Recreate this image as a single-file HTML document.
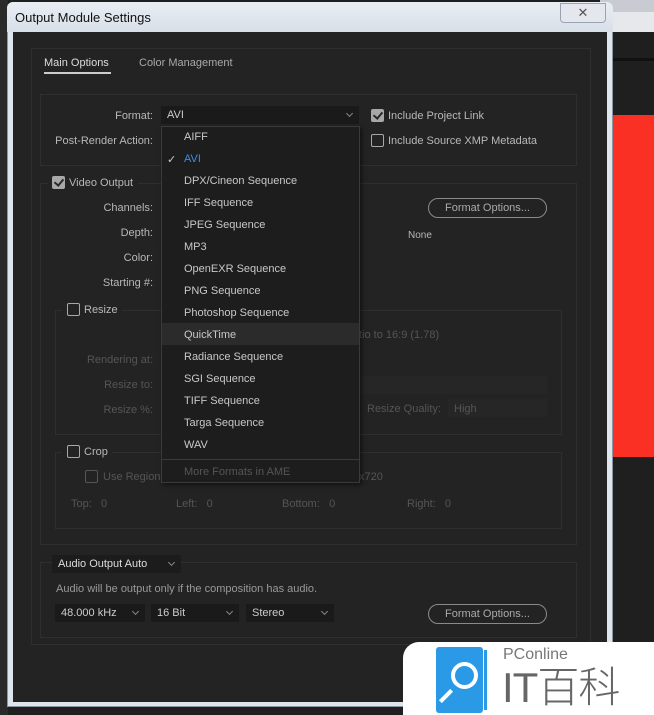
<!DOCTYPE html>
<html><head><meta charset="utf-8"><style>
*{margin:0;padding:0;box-sizing:border-box}
body{width:654px;height:715px;overflow:hidden;background:#1f1f1f;position:relative;font-family:"Liberation Sans",sans-serif;font-size:11px;color:#b8b8b8}
.a{position:absolute;white-space:nowrap}
.t{margin-top:1px}
.box{position:absolute;border:1px solid #2f2f2f}
.r{text-align:right;width:120px}
.cb{position:absolute;width:13px;height:13px;border:1.5px solid #a8a8a8;border-radius:2px}
.cb.on{background:#a8a8a8}
.cb.on:after{content:"";position:absolute;left:3px;top:0px;width:4px;height:7px;border:solid #2a2a2a;border-width:0 2px 2px 0;transform:rotate(40deg)}
.dd{position:absolute;background:#1a1a1a;height:18px;color:#ccc;padding:3px 0 0 6px}
.dd:after{content:"";position:absolute;right:7px;top:5px;width:4px;height:4px;border:solid #888;border-width:0 1px 1px 0;transform:rotate(45deg)}
.btn{position:absolute;border:1px solid #8a8a8a;border-radius:10px;height:20px;text-align:center;color:#aaa;padding-top:3px}
.dim{color:#555}
.it{position:absolute;left:22px;color:#c8c8c8;margin-top:1px}
</style></head><body>
<div class="a" style="left:600px;top:0;width:54px;height:12px;background:#c8ccd2"></div>
<div class="a" style="left:600px;top:12px;width:54px;height:20px;background:#e6e8ec"></div>
<div class="a" style="left:612px;top:58px;width:42px;height:3px;background:#111"></div>
<div class="a" style="left:612px;top:115px;width:42px;height:342px;background:#fb3024"></div>
<div class="a" style="left:0;top:0;width:8px;height:715px;background:#2a2a2a"></div>
<div class="a" style="left:7px;top:2px;width:606px;height:705px;background:#dfe5ec;border:1px solid #8a96a4;border-radius:6px 6px 0 0"></div>
<div class="a" style="left:7px;top:2px;width:606px;height:30px;background:linear-gradient(#e9eef4,#d8dfe8);border-radius:6px 6px 0 0"></div>
<div class="a" style="left:15px;top:10px;font-size:13px;color:#111">Output Module Settings</div>
<div class="a" style="left:560px;top:3px;width:46px;height:20px;border:1px solid #9aa4b0;border-radius:0 0 4px 4px;background:#e4e8ee;text-align:center;color:#555;font-size:13px;line-height:18px">✕</div>
<div class="a" style="left:13px;top:32px;width:594px;height:670px;background:#232323"></div>
<div class="box" style="left:31px;top:48px;width:560px;height:597px"></div>
<div class="a t" style="left:44px;top:56px;color:#ddd">Main Options</div>
<div class="a" style="left:44px;top:72px;width:67px;height:2px;background:#ccc"></div>
<div class="a t" style="left:139px;top:56px;color:#aaa">Color Management</div>
<div class="box" style="left:40px;top:94px;width:537px;height:72px"></div>
<div class="a r t" style="left:33px;top:109px">Format:</div>
<div class="a r t" style="left:33px;top:134px">Post-Render Action:</div>
<div class="dd" style="left:161px;top:106px;width:198px">AVI</div>
<div class="cb on" style="left:371px;top:109px"></div>
<div class="a t" style="left:388px;top:109px">Include Project Link</div>
<div class="cb" style="left:371px;top:134px"></div>
<div class="a t" style="left:388px;top:134px">Include Source XMP Metadata</div>
<div class="box" style="left:40px;top:183px;width:537px;height:362px"></div>
<div class="a" style="left:48px;top:176px;width:90px;height:14px;background:#232323"></div>
<div class="cb on" style="left:52px;top:176px"></div>
<div class="a t" style="left:69px;top:176px">Video Output</div>
<div class="a r t" style="left:33px;top:201px">Channels:</div>
<div class="a r t" style="left:33px;top:226px">Depth:</div>
<div class="a r t" style="left:33px;top:251px">Color:</div>
<div class="a r t" style="left:33px;top:276px">Starting #:</div>
<div class="btn" style="left:428px;top:198px;width:119px">Format Options...</div>
<div class="a" style="left:408px;top:230px;font-size:10px">None</div>
<div class="box" style="left:55px;top:310px;width:507px;height:125px"></div>
<div class="a" style="left:62px;top:302px;width:60px;height:14px;background:#232323"></div>
<div class="cb" style="left:67px;top:303px"></div>
<div class="a t" style="left:84px;top:303px">Resize</div>
<div class="a dim t" style="left:359px;top:328px">tio to 16:9 (1.78)</div>
<div class="a r dim t" style="left:33px;top:353px">Rendering at:</div>
<div class="a r dim t" style="left:33px;top:378px">Resize to:</div>
<div class="a r dim t" style="left:33px;top:403px">Resize %:</div>
<div class="a" style="left:359px;top:376px;width:188px;height:18px;background:#262626"></div>
<div class="a dim t" style="left:367px;top:402px">Resize Quality:</div>
<div class="a dim" style="left:448px;top:399px;width:99px;height:18px;background:#262626;padding:4px 6px">High</div>
<div class="box" style="left:55px;top:452px;width:507px;height:77px"></div>
<div class="a" style="left:62px;top:444px;width:50px;height:14px;background:#232323"></div>
<div class="cb" style="left:67px;top:445px"></div>
<div class="a t" style="left:84px;top:445px">Crop</div>
<div class="cb" style="left:85px;top:470px;border-color:#555"></div>
<div class="a dim t" style="left:103px;top:470px">Use Region</div>
<div class="a dim t" style="left:359px;top:470px">x720</div>
<div class="a dim t" style="left:71px;top:497px">Top:&nbsp;&nbsp; 0</div>
<div class="a dim t" style="left:176px;top:497px">Left:&nbsp;&nbsp; 0</div>
<div class="a dim t" style="left:282px;top:497px">Bottom:&nbsp;&nbsp; 0</div>
<div class="a dim t" style="left:407px;top:497px">Right:&nbsp;&nbsp; 0</div>
<div class="box" style="left:40px;top:562px;width:537px;height:76px"></div>
<div class="dd" style="left:52px;top:555px;width:129px;background:#1c1c1c;color:#ddd">Audio Output Auto</div>
<div class="a t" style="left:56px;top:582px;color:#999">Audio will be output only if the composition has audio.</div>
<div class="dd" style="left:55px;top:604px;width:90px">48.000 kHz</div>
<div class="dd" style="left:151px;top:604px;width:88px">16 Bit</div>
<div class="dd" style="left:246px;top:604px;width:88px">Stereo</div>
<div class="btn" style="left:428px;top:604px;width:119px">Format Options...</div>
<div class="a" style="left:161px;top:126px;width:199px;height:357px;background:#1d1d1d;border:1px solid #3a3a3a;box-shadow:2px 2px 4px rgba(0,0,0,.5)">
<div class="a" style="left:0;top:196px;width:197px;height:22px;background:#2b2b2b"></div>
<div class="it" style="top:3px">AIFF</div>
<div class="a" style="left:5px;top:26px;color:#ccc">✓</div>
<div class="it" style="top:25px;color:#3d8ee6">AVI</div>
<div class="it" style="top:47px">DPX/Cineon Sequence</div>
<div class="it" style="top:69px">IFF Sequence</div>
<div class="it" style="top:91px">JPEG Sequence</div>
<div class="it" style="top:113px">MP3</div>
<div class="it" style="top:135px">OpenEXR Sequence</div>
<div class="it" style="top:157px">PNG Sequence</div>
<div class="it" style="top:179px">Photoshop Sequence</div>
<div class="it" style="top:201px">QuickTime</div>
<div class="it" style="top:223px">Radiance Sequence</div>
<div class="it" style="top:245px">SGI Sequence</div>
<div class="it" style="top:267px">TIFF Sequence</div>
<div class="it" style="top:289px">Targa Sequence</div>
<div class="it" style="top:311px">WAV</div>
<div class="a" style="left:0;top:332px;width:197px;height:1px;background:#3a3a3a"></div>
<div class="it" style="top:338px;color:#555">More Formats in AME</div>
</div>
<div class="a" style="left:403px;top:642px;width:251px;height:73px;background:#fff;border-radius:16px 0 0 0"></div>
<div class="a" style="left:436px;top:647px;width:47px;height:66px;background:#2a9ae6;border-radius:3px"></div>
<div class="a" style="left:484px;top:650px;width:3px;height:60px;background:#2a9ae6"></div>
<div class="a" style="left:451px;top:662px;width:27px;height:27px;border:4px solid #fff;border-radius:50%"></div>
<div class="a" style="left:438px;top:694px;width:16px;height:4px;background:#fff;transform:rotate(-45deg)"></div>
<div class="a" style="left:503px;top:646px;font-size:16px;color:#777">PConline</div>
<div class="a" style="left:502px;top:663px;font-size:42px;line-height:50px;color:#666;font-family:'Liberation Sans','Noto Sans CJK SC',sans-serif;font-weight:300;letter-spacing:-1px">IT百科</div>
</body></html>
